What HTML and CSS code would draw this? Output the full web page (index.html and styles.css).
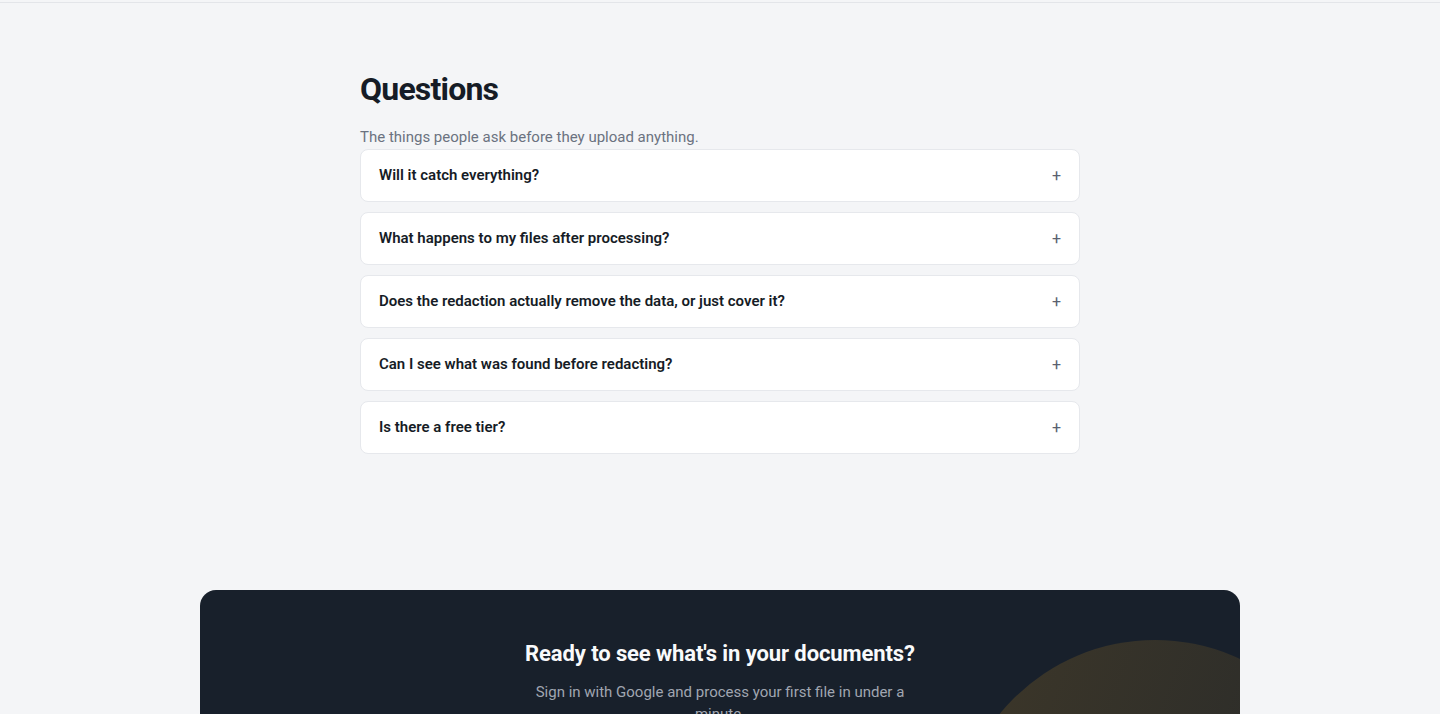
FILE: index.html
```html
<!DOCTYPE html>
<html lang="en">
<head>
    <meta charset="UTF-8">
    <meta name="viewport" content="width=device-width, initial-scale=1.0">
    <title>FAQ</title>
    <link rel="stylesheet" href="styles.css">
</head>
<body>
    <div class="top-edge"></div>

    <section class="faq">
        <h2 class="faq-title">Questions</h2>
        <p class="faq-sub">The things people ask before they upload anything.</p>

        <div class="faq-list">
            <div class="faq-item">
                <span class="faq-q">Will it catch everything?</span>
                <span class="faq-plus">+</span>
            </div>
            <div class="faq-item">
                <span class="faq-q">What happens to my files after processing?</span>
                <span class="faq-plus">+</span>
            </div>
            <div class="faq-item">
                <span class="faq-q">Does the redaction actually remove the data, or just cover it?</span>
                <span class="faq-plus">+</span>
            </div>
            <div class="faq-item">
                <span class="faq-q">Can I see what was found before redacting?</span>
                <span class="faq-plus">+</span>
            </div>
            <div class="faq-item">
                <span class="faq-q">Is there a free tier?</span>
                <span class="faq-plus">+</span>
            </div>
        </div>
    </section>

    <section class="cta">
        <div class="cta-glow"></div>
        <h2 class="cta-title">Ready to see what's in your documents?</h2>
        <p class="cta-text">Sign in with Google and process your first file in under a minute.</p>
    </section>
</body>
</html>
```

FILE: styles.css
```css
* {
    margin: 0;
    padding: 0;
    box-sizing: border-box;
}

body {
    font-family: Roboto, 'Liberation Sans', sans-serif;
    background: #f4f5f7;
    color: #111827;
    min-height: 100vh;
}

.top-edge {
    height: 3px;
    border-bottom: 1px solid #e3e5e9;
}

.faq {
    max-width: 720px;
    margin: 0 auto;
    padding: 67px 0 136px;
}

.faq-title {
    font-size: 32px;
    line-height: 38px;
    font-weight: 700;
    color: #161c26;
    letter-spacing: -0.8px;
    margin-bottom: 18px;
}

.faq-sub {
    font-size: 15px;
    line-height: 22px;
    color: #6b7280;
    margin-bottom: 1px;
}

.faq-list {
    display: flex;
    flex-direction: column;
    gap: 10px;
}

.faq-item {
    display: flex;
    align-items: center;
    justify-content: space-between;
    height: 53px;
    padding: 0 18px 1px;
    background: #fff;
    border: 1px solid #e6e8ec;
    border-radius: 8px;
}

.faq-q {
    font-size: 15px;
    font-weight: 600;
    color: #161c26;
}

.faq-plus {
    font-size: 16px;
    color: #5b6170;
}

.cta {
    position: relative;
    overflow: hidden;
    max-width: 1040px;
    margin: 0 auto;
    padding: 50px 20px 60px;
    background: #18202b;
    border-radius: 16px;
    text-align: center;
}

.cta-glow {
    position: absolute;
    top: 50px;
    right: -115px;
    width: 400px;
    height: 400px;
    border-radius: 50%;
    background: linear-gradient(110deg, rgba(245, 170, 30, 0.17) 0%, rgba(245, 170, 30, 0.1) 60%, rgba(245, 170, 30, 0.04) 100%);
}

.cta-title {
    position: relative;
    font-size: 22px;
    line-height: 28px;
    font-weight: 700;
    color: #f9fafb;
    letter-spacing: -0.1px;
    margin-bottom: 13px;
}

.cta-text {
    position: relative;
    max-width: 400px;
    margin: 0 auto;
    font-size: 15px;
    line-height: 22px;
    color: #a0a6b1;
}
```
